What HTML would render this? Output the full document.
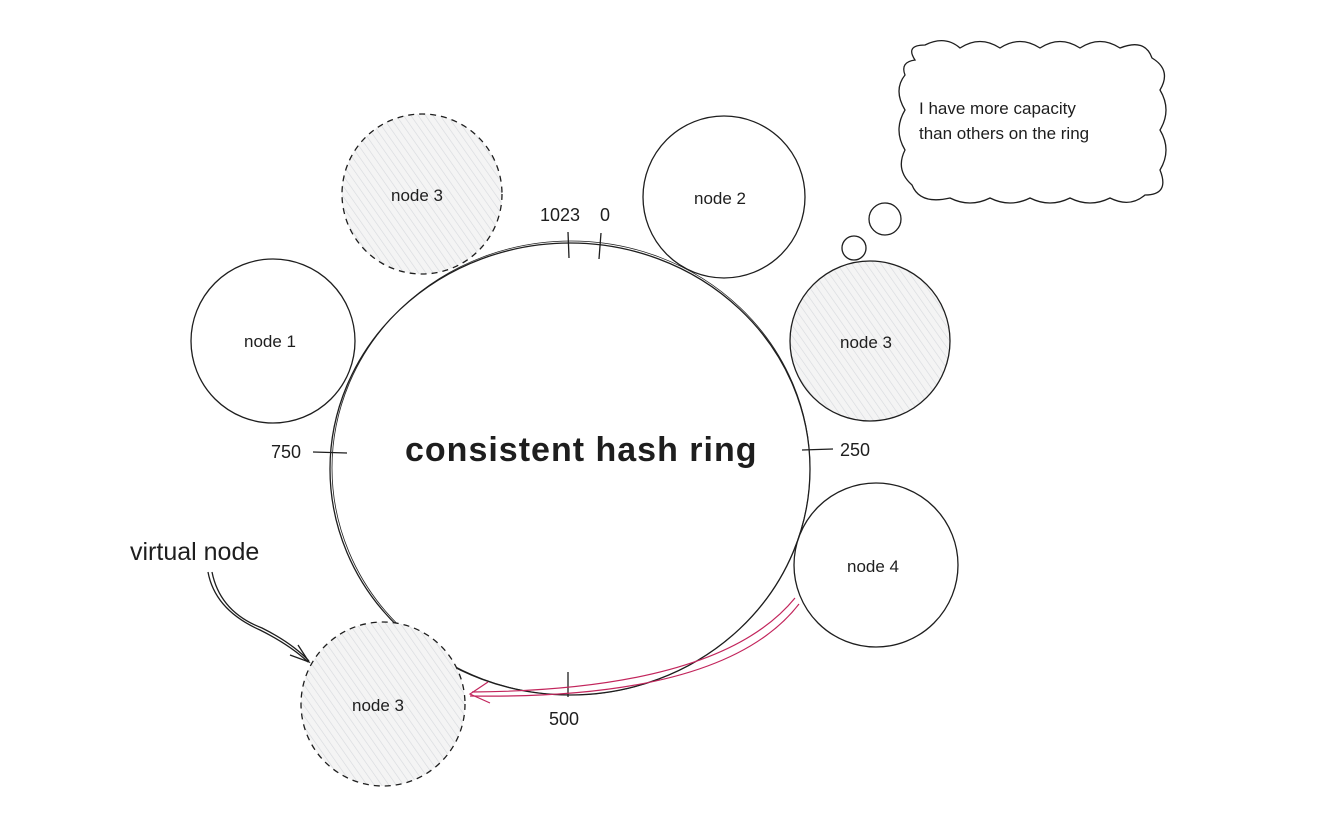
<!DOCTYPE html>
<html><head><meta charset="utf-8"><style>
html,body{margin:0;padding:0;background:#fff;width:1335px;height:825px;overflow:hidden}
text{font-family:"Liberation Sans","DejaVu Sans",sans-serif;fill:#1e1e1e}
</style></head><body>
<svg width="1335" height="825" viewBox="0 0 1335 825" xmlns="http://www.w3.org/2000/svg">
<defs>
<pattern id="h" width="6" height="6" patternUnits="userSpaceOnUse" patternTransform="rotate(-35)">
<rect width="6" height="6" fill="#f4f4f4"/>
<line x1="0" y1="0" x2="0" y2="6" stroke="#d6d9dd" stroke-width="1.2"/>
</pattern>
</defs>
<g fill="none" stroke="#1e1e1e" stroke-width="1.3">
<!-- main ring -->
<ellipse cx="570" cy="469" rx="240" ry="226"/>
<ellipse cx="571" cy="468" rx="239" ry="227" stroke-width="0.8"/>
<!-- nodes -->
<circle cx="422" cy="194" r="80" fill="url(#h)" stroke-dasharray="6 5"/>
<circle cx="724" cy="197" r="81" fill="#fff"/>
<circle cx="273" cy="341" r="82" fill="#fff"/>
<circle cx="870" cy="341" r="80" fill="url(#h)"/>
<circle cx="876" cy="565" r="82" fill="#fff"/>
<circle cx="383" cy="704" r="82" fill="url(#h)" stroke-dasharray="6 5"/>
<!-- ticks -->
<line x1="568" y1="232" x2="569" y2="258"/>
<line x1="601" y1="233" x2="599" y2="259"/>
<line x1="313" y1="452" x2="347" y2="453"/>
<line x1="802" y1="450" x2="833" y2="449"/>
<line x1="568" y1="672" x2="568" y2="697"/>
<!-- cloud -->
<path d="M915 60 Q905 45 925 45 Q945 35 960 48 Q980 35 1000 48 Q1020 35 1040 48 Q1060 35 1080 48 Q1100 35 1120 48 Q1145 38 1152 58 Q1172 70 1160 90 Q1172 110 1160 130 Q1172 150 1160 170 Q1170 195 1145 195 Q1130 208 1110 198 Q1090 208 1070 198 Q1050 208 1030 198 Q1010 208 990 198 Q970 208 950 198 Q920 205 912 185 Q895 170 905 150 Q893 130 905 110 Q893 90 905 75 Q900 62 915 60 Z" fill="#fff"/>
<circle cx="885" cy="219" r="16"/>
<circle cx="854" cy="248" r="12"/>
<!-- virtual node arrow -->
<path d="M208 572 Q215 610 260 630 Q290 645 308 662"/>
<path d="M212 572 Q220 612 262 628 Q292 643 309 661"/>
<path d="M290 655 L309 662 L298 645"/>
</g>
<g fill="none" stroke="#c2255c" stroke-width="1.2">
<path d="M795 598 Q720 690 472 692"/>
<path d="M799 604 Q725 700 470 696"/>
<path d="M488 682 L470 694 L490 703"/>
</g>
<text x="391" y="201" font-size="17">node 3</text>
<text x="694" y="204" font-size="17">node 2</text>
<text x="244" y="347" font-size="17">node 1</text>
<text x="840" y="348" font-size="17">node 3</text>
<text x="847" y="572" font-size="17">node 4</text>
<text x="352" y="711" font-size="17">node 3</text>
<text x="540" y="221" font-size="18">1023</text>
<text x="600" y="221" font-size="18">0</text>
<text x="271" y="458" font-size="18">750</text>
<text x="840" y="456" font-size="18">250</text>
<text x="549" y="725" font-size="18">500</text>
<text x="405" y="461" font-size="34" font-weight="bold" letter-spacing="1">consistent hash ring</text>
<text x="130" y="560" font-size="25">virtual node</text>
<text x="919" y="114" font-size="17">I have more capacity</text>
<text x="919" y="139" font-size="17">than others on the ring</text>
</svg>
</body></html>
